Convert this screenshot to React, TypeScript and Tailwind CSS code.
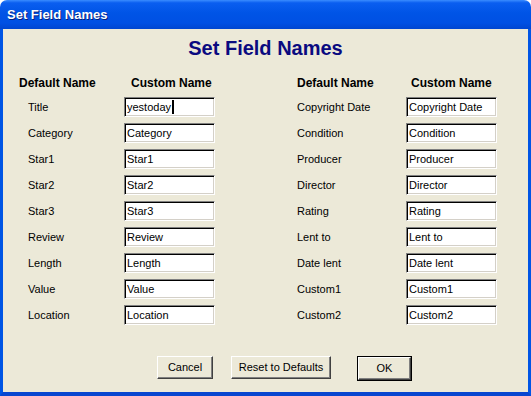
import React from "react";

const left = ["Title", "Category", "Star1", "Star2", "Star3", "Review", "Length", "Value", "Location"];
const right = ["Copyright Date", "Condition", "Producer", "Director", "Rating", "Lent to", "Date lent", "Custom1", "Custom2"];

function Field({ value, caret }: { value: string; caret?: boolean }) {
  return (
    <div className="flex h-[20px] w-[91px] items-center border border-t-[#808080] border-l-[#808080] border-b-white border-r-white bg-white pl-[2px] text-[11px] leading-none text-black shadow-[inset_1px_1px_0_#000,inset_-1px_-1px_0_#d4d0c8]">
      <span>{value}</span>
      {caret && <span className="ml-px inline-block h-[14px] w-[2px] bg-black" />}
    </div>
  );
}

function Btn({ label, w }: { label: string; w: string }) {
  return (
    <div
      className={`flex h-[23px] ${w} items-center justify-center border border-t-white border-l-white border-b-[#404040] border-r-[#404040] bg-[#ece9d8] text-[11px] text-black shadow-[inset_-1px_-1px_0_#808080]`}
    >
      {label}
    </div>
  );
}

export default function App() {
  return (
    <div className="flex h-[396px] w-[531px] flex-col bg-white font-['Liberation_Sans',Arial,sans-serif]">
      <div className="flex h-[29px] shrink-0 items-center rounded-t-[7px] bg-[linear-gradient(to_bottom,#3a8cff_0%,#0a5ef0_10%,#0054e6_45%,#0050e3_80%,#0046d0_100%)] pl-[7px]">
        <span className="text-[13px] font-bold text-white [text-shadow:1px_1px_0_#0a1f7a]">Set Field Names</span>
      </div>
      <div className="flex flex-1 flex-col border-x-[3px] border-b-[4px] border-x-[#0055e5] border-b-[#0846d0] bg-[#ece9d8]">
        <h1 className="pt-[7px] text-center text-[20px] font-bold leading-[24px] text-[#0a0a80]">Set Field Names</h1>

        <div className="mt-[16px] flex pl-[16px]">
          <div className="grid grid-cols-[105px_91px] gap-y-[6px]">
            <div className="h-[15px] text-[12px] font-bold leading-[14px]">Default Name</div>
            <div className="h-[15px] pl-[7px] text-[12px] font-bold leading-[14px]">Custom Name</div>
            {left.map((l, i) => (
              <React.Fragment key={l}>
                <div className="flex h-[20px] items-center pl-[9px] text-[11px]">{l}</div>
                <Field value={i === 0 ? "yestoday" : l} caret={i === 0} />
              </React.Fragment>
            ))}
          </div>

          <div className="ml-[82px] grid grid-cols-[109px_91px] gap-y-[6px]">
            <div className="h-[15px] text-[12px] font-bold leading-[14px]">Default Name</div>
            <div className="h-[15px] pl-[5px] text-[12px] font-bold leading-[14px]">Custom Name</div>
            {right.map((r) => (
              <React.Fragment key={r}>
                <div className="flex h-[20px] items-center text-[11px]">{r}</div>
                <Field value={r} />
              </React.Fragment>
            ))}
          </div>
        </div>

        <div className="mt-[31px] flex pl-[154px]">
          <Btn label="Cancel" w="w-[56px]" />
          <div className="ml-[18px]">
            <Btn label="Reset to Defaults" w="w-[100px]" />
          </div>
          <div className="ml-[26px] border border-black">
            <Btn label="OK" w="w-[53px]" />
          </div>
        </div>
      </div>
    </div>
  );
}
